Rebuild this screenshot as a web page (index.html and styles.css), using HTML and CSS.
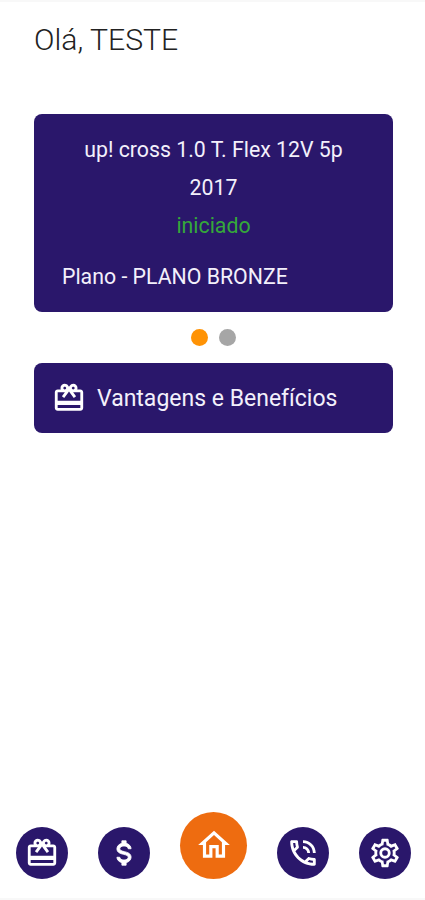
FILE: index.html
```html
<!DOCTYPE html>
<html lang="pt-BR">
<head>
<meta charset="utf-8">
<meta name="viewport" content="width=device-width, initial-scale=1">
<title>Início</title>
<link rel="stylesheet" href="styles.css">
</head>
<body>
<svg class="defs" width="0" height="0" aria-hidden="true">
  <symbol id="gift" viewBox="0 0 24 24"><path d="M20 6h-2.18c.11-.31.18-.65.18-1 0-1.66-1.34-3-3-3-1.05 0-1.96.54-2.5 1.35l-.5.67-.5-.68C10.96 2.54 10.05 2 9 2 7.34 2 6 3.34 6 5c0 .35.07.69.18 1H4c-1.11 0-1.99.89-1.99 2L2 19c0 1.11.89 2 2 2h16c1.11 0 2-.89 2-2V8c0-1.11-.89-2-2-2zm-5-2c.55 0 1 .45 1 1s-.45 1-1 1-1-.45-1-1 .45-1 1-1zM9 4c.55 0 1 .45 1 1s-.45 1-1 1-1-.45-1-1 .45-1 1-1zm11 15H4v-2h16v2zm0-5H4V8h5.08L7 10.83 8.62 12 11 8.76l1-1.36 1 1.36L15.38 12 17 10.83 14.92 8H20v6z"/></symbol>
</svg>
<div class="app">
  <main class="content">
    <h1 class="greeting">Olá, TESTE</h1>
    <section class="vehicle">
      <p class="vehicle-line model">up! cross 1.0 T. Flex 12V 5p</p>
      <p class="vehicle-line year">2017</p>
      <p class="vehicle-line status">iniciado</p>
      <p class="plan">Plano - PLANO BRONZE</p>
    </section>
    <div class="dots"><span class="dot dot-active"></span><span class="dot"></span></div>
    <a class="benefits">
      <svg class="icon"><use href="#gift"/></svg>
      <span>Vantagens e Benefícios</span>
    </a>
  </main>
  <nav class="nav">
    <a class="nav-item"><svg class="icon"><use href="#gift"/></svg></a>
    <a class="nav-item"><svg class="icon icon-bold" viewBox="0 0 24 24"><path d="M7 15h2c0 1.08 1.37 2 3 2s3-.92 3-2c0-1.1-1.04-1.5-3.24-2.03C9.64 12.44 7 11.78 7 9c0-1.79 1.47-3.31 3.5-3.82V3.4h3v1.78C15.53 5.69 17 7.21 17 9h-2c0-1.08-1.37-2-3-2s-3 .92-3 2c0 1.1 1.04 1.5 3.24 2.03C14.36 11.56 17 12.22 17 15c0 1.79-1.47 3.31-3.5 3.82v1.78h-3v-1.78C8.47 18.31 7 16.79 7 15z"/></svg></a>
    <a class="nav-item nav-home"><svg class="icon" viewBox="0 0 24 24"><path d="M12 5.69l5 4.5V18h-2v-6H9v6H7v-7.81l5-4.5M12 3L2 12h3v8h6v-6h2v6h6v-8h3L12 3z"/></svg></a>
    <a class="nav-item"><svg class="icon" viewBox="0 0 24 24"><path d="M19 12h2c0-4.97-4.03-9-9-9v2c3.87 0 7 3.13 7 7zm-4 0h2c0-2.76-2.24-5-5-5v2c1.66 0 3 1.34 3 3zm5 3.5c-1.25 0-2.45-.2-3.57-.57-.1-.03-.21-.05-.31-.05-.26 0-.51.1-.71.29l-2.2 2.2c-2.83-1.44-5.15-3.75-6.59-6.59l2.2-2.2c.28-.26.36-.65.25-1C8.7 6.45 8.5 5.25 8.5 4c0-.55-.45-1-1-1H4c-.55 0-1 .45-1 1 0 9.39 7.61 17 17 17 .55 0 1-.45 1-1v-3.5c0-.55-.45-1-1-1zM5.03 5h1.5c.07.88.22 1.75.46 2.59L5.79 8.8c-.41-1.21-.67-2.48-.76-3.8zM19 18.97c-1.32-.09-2.6-.35-3.8-.76l1.2-1.2c.85.24 1.71.39 2.59.45v1.51z"/></svg></a>
    <a class="nav-item"><svg class="icon" viewBox="0 0 24 24"><path d="M12,8A4,4 0 0,1 16,12A4,4 0 0,1 12,16A4,4 0 0,1 8,12A4,4 0 0,1 12,8M12,10A2,2 0 0,0 10,12A2,2 0 0,0 12,14A2,2 0 0,0 14,12A2,2 0 0,0 12,10M10,22C9.75,22 9.54,21.82 9.5,21.58L9.13,18.93C8.5,18.68 7.96,18.34 7.44,17.94L4.95,18.95C4.73,19.03 4.46,18.95 4.34,18.73L2.34,15.27C2.21,15.05 2.27,14.78 2.46,14.63L4.57,12.97L4.5,12L4.57,11L2.46,9.37C2.27,9.22 2.21,8.95 2.34,8.73L4.34,5.27C4.46,5.05 4.73,4.96 4.95,5.05L7.44,6.05C7.96,5.66 8.5,5.32 9.13,5.07L9.5,2.42C9.54,2.18 9.75,2 10,2H14C14.25,2 14.46,2.18 14.5,2.42L14.87,5.07C15.5,5.32 16.04,5.66 16.56,6.05L19.05,5.05C19.27,4.96 19.54,5.05 19.66,5.27L21.66,8.73C21.79,8.95 21.73,9.22 21.54,9.37L19.43,11L19.5,12L19.43,13L21.54,14.63C21.73,14.78 21.79,15.05 21.66,15.27L19.66,18.73C19.54,18.95 19.27,19.04 19.05,18.95L16.56,17.95C16.04,18.34 15.5,18.68 14.87,18.93L14.5,21.58C14.46,21.82 14.25,22 14,22H10M11.25,4L10.88,6.61C9.68,6.86 8.62,7.5 7.85,8.39L5.44,7.35L4.69,8.65L6.8,10.2C6.4,11.37 6.4,12.64 6.8,13.8L4.68,15.36L5.43,16.66L7.86,15.62C8.63,16.5 9.68,17.14 10.87,17.38L11.24,20H12.76L13.13,17.39C14.32,17.14 15.37,16.5 16.14,15.62L18.57,16.66L19.32,15.36L17.2,13.81C17.6,12.64 17.6,11.37 17.2,10.2L19.31,8.65L18.56,7.35L16.15,8.39C15.38,7.5 14.32,6.86 13.12,6.62L12.75,4H11.25Z"/></svg></a>
  </nav>
</div>
</body>
</html>
```
FILE: styles.css
```css
* { box-sizing: border-box; }
body { margin: 0; background: #fff; font-family: Roboto, "Liberation Sans", sans-serif; }
p, h1 { margin: 0; font-weight: 400; white-space: nowrap; }
.defs { display: block; }
.app {
  height: 900px;
  display: flex;
  flex-direction: column;
  justify-content: space-between;
  border-top: 2px solid #f8f8f8;
  border-bottom: 2px solid #f8f8f8;
}
.content { padding: 18px 32px 0 34px; }
.greeting { height: 94px; font-size: 30.2px; line-height: 39px; font-weight: 300; color: #222; }
.vehicle {
  height: 198px;
  padding: 17px 28px;
  border-radius: 8px;
  background: #2a176b;
  color: #f3f0fb;
  font-size: 21.3px;
}
.vehicle-line { line-height: 38px; text-align: center; }
.status { color: #35a83a; }
.plan { margin-top: 13px; line-height: 38px; }
.dots { height: 51px; display: flex; align-items: center; justify-content: center; gap: 11px; }
.dot { width: 17px; height: 17px; border-radius: 50%; background: #a6a6a6; }
.dot-active { background: #ff9305; }
.icon { width: 34px; height: 34px; fill: #fff; flex: none; }
.icon-bold { stroke: #fff; stroke-width: 0.6; stroke-linejoin: round; }
.benefits {
  height: 70px;
  padding-left: 18px;
  display: flex;
  align-items: center;
  gap: 11px;
  border-radius: 8px;
  background: #2a176b;
  color: #f3f0fb;
  font-size: 23px;
  white-space: nowrap;
}
.nav { display: flex; justify-content: space-between; align-items: flex-end; padding: 0 14px 19.5px 16px; }
.nav-item {
  width: 52px;
  height: 52px;
  display: flex;
  align-items: center;
  justify-content: center;
  border-radius: 50%;
  background: #2a176b;
}
.nav-home { width: 67px; height: 67px; background: #ee6c10; }
.nav-home .icon { width: 38px; height: 38px; }
```
